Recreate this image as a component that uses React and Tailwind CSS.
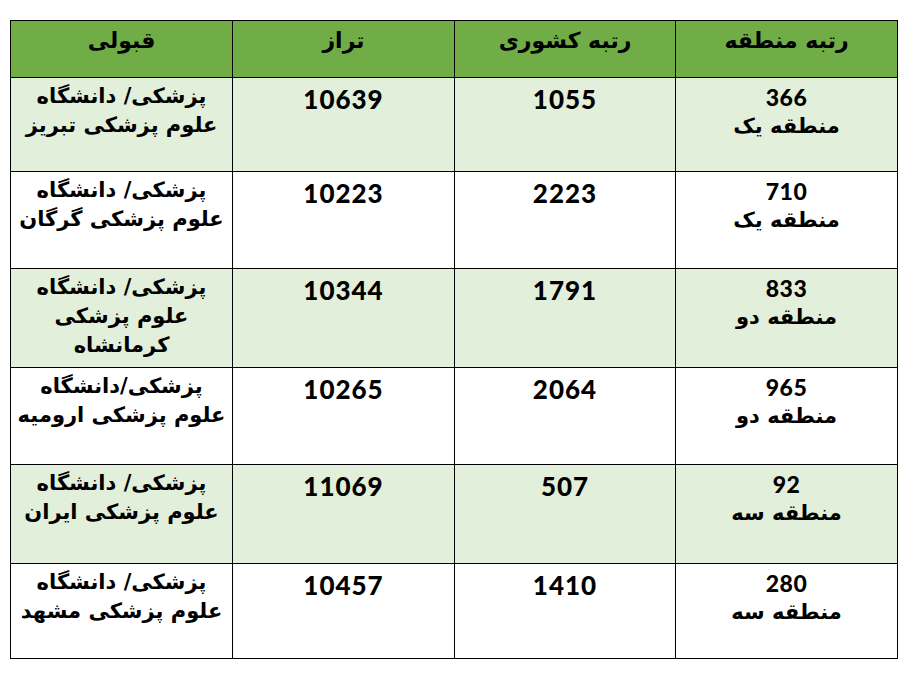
import React from 'react';

const rows = [
  { rank: '366', region: 'منطقه یک', country: '1055', score: '10639', uni: ['پزشکی/ دانشگاه', 'علوم پزشکی تبریز'], h: 'h-[94px]' },
  { rank: '710', region: 'منطقه یک', country: '2223', score: '10223', uni: ['پزشکی/ دانشگاه', 'علوم پزشکی گرگان'], h: 'h-[97px]' },
  { rank: '833', region: 'منطقه دو', country: '1791', score: '10344', uni: ['پزشکی/ دانشگاه', 'علوم پزشکی', 'کرمانشاه'], h: 'h-[99px]' },
  { rank: '965', region: 'منطقه دو', country: '2064', score: '10265', uni: ['پزشکی/دانشگاه', 'علوم پزشکی ارومیه'], h: 'h-[97px]' },
  { rank: '92', region: 'منطقه سه', country: '507', score: '11069', uni: ['پزشکی/ دانشگاه', 'علوم پزشکی ایران'], h: 'h-[99px]' },
  { rank: '280', region: 'منطقه سه', country: '1410', score: '10457', uni: ['پزشکی/ دانشگاه', 'علوم پزشکی مشهد'], h: 'h-[95px]' },
];

const fa = { fontFamily: '"DejaVu Sans", "Liberation Sans", sans-serif' };
const num = { fontFamily: 'Lato, "Open Sans", sans-serif' };

export default function App() {
  return (
    <div className="w-[908px] h-[680px] bg-white pt-[20px] pl-[10px]">
      <table dir="rtl" className="table-fixed border-collapse w-[887px] text-black font-bold">
        <colgroup>
          <col className="w-[222px]" />
          <col className="w-[221px]" />
          <col className="w-[222px]" />
          <col className="w-[222px]" />
        </colgroup>
        <thead>
          <tr className="h-[57px] bg-[#70ad47]">
            {['رتبه منطقه', 'رتبه کشوری', 'تراز', 'قبولی'].map((t) => (
              <th key={t} style={fa} className="border border-black text-center align-top pt-[5px] text-[22px] leading-[30px] font-bold">
                {t}
              </th>
            ))}
          </tr>
        </thead>
        <tbody>
          {rows.map((r, i) => (
            <tr key={i} className={`${r.h} ${i % 2 === 0 ? 'bg-[#e2efda]' : 'bg-white'}`}>
              <td className="border border-black text-center align-top pt-[5px]">
                <div style={num} className="text-[23px] leading-[28px] tracking-[0.5px] font-black">{r.rank}</div>
                <div style={fa} className="text-[21px] leading-[30px]">{r.region}</div>
              </td>
              <td style={num} className="border border-black text-center align-top pt-[5px] text-[26px] leading-[32px] tracking-[1px] font-black">
                {r.country}
              </td>
              <td style={num} className="border border-black text-center align-top pt-[5px] text-[26px] leading-[32px] tracking-[1px] font-black">
                {r.score}
              </td>
              <td style={fa} className="border border-black text-center align-top pt-[4px] text-[21px] leading-[29px]">
                {r.uni.map((l) => (
                  <div key={l}>{l}</div>
                ))}
              </td>
            </tr>
          ))}
        </tbody>
      </table>
    </div>
  );
}
